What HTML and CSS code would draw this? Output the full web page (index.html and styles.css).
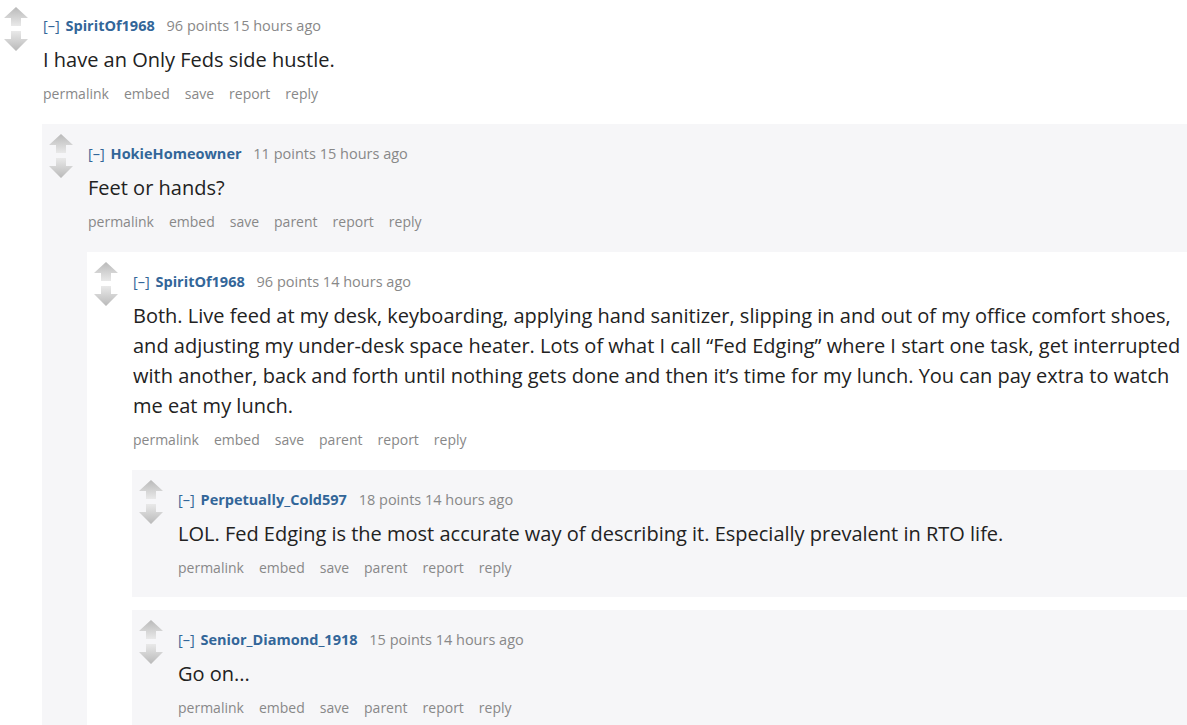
FILE: index.html
```html
<!doctype html>
<html lang="en">

<head>
    <meta charset="UTF-8" />
    <meta name="viewport" content="width=device-width, initial-scale=1.0" />
    <title>Comments</title>
    <link rel="stylesheet" href="styles.css">
</head>

<body>
    <svg width="0" height="0" class="defs">
        <defs>
            <linearGradient id="upGrad" x1="0" y1="0" x2="0" y2="1">
                <stop offset="0" stop-color="#b9b9b9" />
                <stop offset="1" stop-color="#e9e9e9" />
            </linearGradient>
            <linearGradient id="downGrad" x1="0" y1="0" x2="0" y2="1">
                <stop offset="0" stop-color="#e9e9e9" />
                <stop offset="1" stop-color="#b9b9b9" />
            </linearGradient>
            <symbol id="arrows" viewBox="0 0 24 44">
                <path d="M12 0 L24 11 L17 11 L17 19 L7 19 L7 11 L0 11 Z" fill="url(#upGrad)" />
                <path d="M7 24 L17 24 L17 32 L24 32 L12 44 L0 32 L7 32 Z" fill="url(#downGrad)" />
            </symbol>
        </defs>
    </svg>

    <div class="comment root">
        <svg class="arrows"><use href="#arrows" /></svg>
        <div class="entry">
            <p class="tagline"><span class="expand">[–]</span> <a class="author">SpiritOf1968</a> <span class="score">96 points 15 hours ago</span></p>
            <p class="md">I have an Only Feds side hustle.</p>
            <ul class="buttons">
                <li>permalink</li><li>embed</li><li>save</li><li>report</li><li>reply</li>
            </ul>

            <div class="children">
                <div class="comment odd">
                    <svg class="arrows"><use href="#arrows" /></svg>
                    <div class="entry">
                        <p class="tagline"><span class="expand">[–]</span> <a class="author">HokieHomeowner</a> <span class="score">11 points 15 hours ago</span></p>
                        <p class="md">Feet or hands?</p>
                        <ul class="buttons">
                            <li>permalink</li><li>embed</li><li>save</li><li>parent</li><li>report</li><li>reply</li>
                        </ul>

                        <div class="children">
                            <div class="comment even">
                                <svg class="arrows"><use href="#arrows" /></svg>
                                <div class="entry">
                                    <p class="tagline"><span class="expand">[–]</span> <a class="author">SpiritOf1968</a> <span class="score">96 points 14 hours ago</span></p>
                                    <p class="md">Both. Live feed at my desk, keyboarding, applying hand sanitizer, slipping in and out of my office comfort shoes, and adjusting my under-desk space heater. Lots of what I call “Fed Edging” where I start one task, get interrupted with another, back and forth until nothing gets done and then it’s time for my lunch. You can pay extra to watch me eat my lunch.</p>
                                    <ul class="buttons">
                                        <li>permalink</li><li>embed</li><li>save</li><li>parent</li><li>report</li><li>reply</li>
                                    </ul>

                                    <div class="children">
                                        <div class="comment odd">
                                            <svg class="arrows"><use href="#arrows" /></svg>
                                            <div class="entry">
                                                <p class="tagline"><span class="expand">[–]</span> <a class="author">Perpetually_Cold597</a> <span class="score">18 points 14 hours ago</span></p>
                                                <p class="md">LOL. Fed Edging is the most accurate way of describing it. Especially prevalent in RTO life.</p>
                                                <ul class="buttons">
                                                    <li>permalink</li><li>embed</li><li>save</li><li>parent</li><li>report</li><li>reply</li>
                                                </ul>
                                            </div>
                                        </div>

                                        <div class="comment odd">
                                            <svg class="arrows"><use href="#arrows" /></svg>
                                            <div class="entry">
                                                <p class="tagline"><span class="expand">[–]</span> <a class="author">Senior_Diamond_1918</a> <span class="score">15 points 14 hours ago</span></p>
                                                <p class="md">Go on...</p>
                                                <ul class="buttons">
                                                    <li>permalink</li><li>embed</li><li>save</li><li>parent</li><li>report</li><li>reply</li>
                                                </ul>
                                            </div>
                                        </div>
                                    </div>
                                </div>
                            </div>
                        </div>
                    </div>
                </div>
            </div>
        </div>
    </div>
</body>

</html>
```

FILE: styles.css
```css
body {
    margin: 0;
    background: #fff;
    font-family: "Open Sans", "Noto Sans", sans-serif;
    color: #222;
    overflow: hidden;
}

.defs {
    position: absolute;
}

.comment {
    display: flex;
    padding-top: 10px;
}

.comment.root {
    margin-left: -3px;
    padding-top: 7px;
}

.comment.odd {
    background: #f6f6f8;
    padding-bottom: 19px;
}

.comment.even {
    background: #fff;
    padding-bottom: 19px;
}

.comment + .comment {
    margin-top: 13px;
}

.arrows {
    flex: none;
    width: 24px;
    height: 44px;
    margin-left: 7px;
    margin-right: 14px;
}

.entry {
    flex: 1;
    min-width: 0;
    padding-top: 10px;
}

.root > .entry {
    padding-top: 9px;
}

.tagline,
.md,
.buttons {
    margin-left: 1px;
}

.tagline {
    margin-top: 0;
    margin-bottom: 0;
    font-size: 14.5px;
    line-height: 20px;
    color: #888;
}

.expand {
    color: #369;
    margin-right: 2px;
}

.author {
    color: #369;
    font-weight: bold;
    margin-right: 8px;
}

.md {
    margin-top: 9px;
    margin-bottom: 0;
    font-size: 20px;
    line-height: 30px;
    color: #222;
}

.buttons {
    list-style: none;
    margin-top: 9px;
    margin-bottom: 0;
    padding: 0;
    display: flex;
    gap: 15px;
    font-size: 14px;
    line-height: 20px;
    color: #888;
}

.children {
    margin-top: 20px;
}
```
